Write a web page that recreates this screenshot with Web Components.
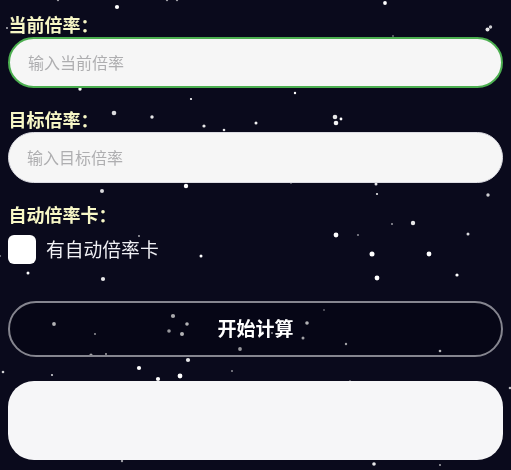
<!DOCTYPE html>
<html lang="zh">
<head>
<meta charset="utf-8">
<title>倍率计算</title>
<style>
html,body{margin:0;height:100%;background:#0a0a1c;overflow:hidden}
body{font-family:"Noto Sans CJK SC","Noto Sans",sans-serif}
</style>
</head>
<body>
<calc-page>
  <star-field slot="bg"></star-field>
  <form-field label="当前倍率" placeholder="输入当前倍率" focused></form-field>
  <form-field label="目标倍率" placeholder="输入目标倍率"></form-field>
  <check-field label="自动倍率卡" text="有自动倍率卡"></check-field>
  <ghost-button>开始计算</ghost-button>
  <result-box></result-box>
</calc-page>
<script>
const F='"Noto Sans CJK SC","Noto Sans",sans-serif';
const LABEL=`font:bold 18px/21px ${F};color:#f7f7c6;height:23px;display:block;padding-left:.5px`;
const COLON=`.c{font-family:"Noto Sans CJK TC",sans-serif}`;
class CalcPage extends HTMLElement{
  constructor(){super();this.attachShadow({mode:'open'}).innerHTML=`<style>
  :host{display:block;position:relative;width:511px;height:470px;overflow:hidden;background:#0a0a1c}
  .bg{position:absolute;inset:0}
  .form{position:relative;display:flex;flex-direction:column;padding:14px 8px 0 8px;box-sizing:border-box;height:100%}
  </style><div class="bg"><slot name="bg"></slot></div><div class="form"><slot></slot></div>`;}
}
class StarField extends HTMLElement{
  constructor(){super();
    const s=[[117,7,2.1,1],[7,28,1,.7],[80,89,1.7,1],[191,99,1.1,1],[114,113,2.3,.85],[152,117,1.7,.9],[204,126,1.6,.9],[224,130,1.3,.9],[256,123,1.5,.95],[58,0,1.2,.6],[167,0,1.2,.6],[177,0,1.2,.6],
    [385,3,1.9,1],[487.5,29.5,2,.9],[490.5,27,1.7,.8],[295,93,1.2,1],[335,117,2.3,.9],[341,119,1.4,1],[336,123,2.3,.95],[393,36,1,.4],
    [102,191,2,.85],[186,186,2.2,1],[139,236,.9,.7],[201,256,1.5,1],[28,273,1.5,1],[103,279,2.1,.9],[0,256,1,.5],
    [376,184,1.5,.9],[377,194,1.1,.9],[488,195,1.7,.8],[392,224,.8,1],[413,223,2.2,.9],[336,235,2.4,1],[358,235,1.1,.5],[468,234,1.5,.85],[372,254,2.5,1],[429,254,2.4,1],[377,278,2.4,1],[457,275,1.6,1],[324,310,1,.5],[291,183,1,.4],
    [173,316,2.1,.95],[54,324,1.9,1],[187,324,1.8,1],[169,331,1.8,.85],[182,334,2,1],[95,334,.9,.9],[240,349,1.9,.85],[91,355,1.6,.9],[106,354,.9,1],[188,360,2.1,.9],[139,368,2.1,1],[3,372,1.3,.8],[52,375,1.1,.8],[180,376,2.4,1],[158,379,2.1,1],[232,371,.8,.9],[122,461,1.2,.6],
    [307,323,1.8,1],[303,338,1.5,.9],[272,333,1,.8],[346,344,1.2,.9],[440,351,1.3,1],[350,381,1,.4],[510,388,1.3,.7],[374,464,1.8,.9],[440,465,.9,.7]];
    const c=s.map(([x,y,r,o])=>`<circle cx="${x}" cy="${y}" r="${r}" fill="#fff" opacity="${o}"/>`).join('');
    this.attachShadow({mode:'open'}).innerHTML=`<style>:host{display:block;width:100%;height:100%}svg{display:block}</style><svg width="511" height="470" viewBox="0 0 511 470" aria-hidden="true"><defs><filter id="b" x="-50%" y="-50%" width="200%" height="200%"><feGaussianBlur stdDeviation=".4"/></filter></defs><g filter="url(#b)">${c}</g></svg>`;}
}
class FormField extends HTMLElement{
  constructor(){super();this.attachShadow({mode:'open'}).innerHTML=`<style>
  :host{display:block;margin-bottom:21px}
  label{${LABEL}}
  ${COLON}
  input{display:block;width:100%;height:51px;box-sizing:border-box;border:1px solid #dcdce2;border-radius:25.5px;background:#f6f6f6;padding:0 18px 2px;font:16px ${F};color:#333;outline:none;margin:0}
  input::placeholder{color:#aeaeb0;opacity:1}
  :host([focused]) input{border:2px solid #4caf50;padding:0 18px 2px}
  </style><label><span class="t"></span><span class="c">：</span></label><input type="text">`;
  }
  connectedCallback(){const r=this.shadowRoot;r.querySelector('.t').textContent=this.getAttribute('label');r.querySelector('input').placeholder=this.getAttribute('placeholder');}
}
class CheckField extends HTMLElement{
  constructor(){super();this.attachShadow({mode:'open'}).innerHTML=`<style>
  :host{display:block;margin-bottom:37px}
  .l{${LABEL}}
  ${COLON}
  .row{display:flex;align-items:center;gap:10px;margin-top:8px;height:29px}
  .box{appearance:none;-webkit-appearance:none;margin:0;width:28px;height:29px;border-radius:6px;background:#fff;border:0;flex:none}
  .t{font:18.8px ${F};color:#f0f0f4;padding-bottom:2px}
  </style><span class="l"><span class="n"></span><span class="c">：</span></span><label class="row"><input class="box" type="checkbox"><span class="t"></span></label>`;}
  connectedCallback(){const r=this.shadowRoot;r.querySelector('.n').textContent=this.getAttribute('label');r.querySelector('.t').textContent=this.getAttribute('text');}
}
class GhostButton extends HTMLElement{
  constructor(){super();this.attachShadow({mode:'open'}).innerHTML=`<style>
  :host{display:block;margin-bottom:24px}
  button{display:block;width:100%;height:56px;box-sizing:border-box;border:2px solid #85858f;border-radius:28px;background:rgba(0,0,10,.3);color:#fff;font:bold 19px ${F};padding:0 0 4px;margin:0}
  </style><button type="button"><slot></slot></button>`;}
}
class ResultBox extends HTMLElement{
  constructor(){super();this.attachShadow({mode:'open'}).innerHTML=`<style>
  :host{display:block;height:79px;border-radius:26px;background:#f6f6f8}
  </style>`;}
}
[['calc-page',CalcPage],['star-field',StarField],['form-field',FormField],['check-field',CheckField],['ghost-button',GhostButton],['result-box',ResultBox]].forEach(([n,c])=>customElements.define(n,c));
</script>
</body>
</html>
